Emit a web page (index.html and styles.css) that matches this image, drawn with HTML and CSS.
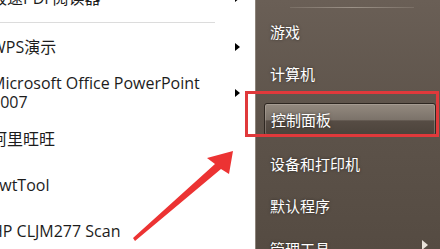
FILE: index.html
```html
<!DOCTYPE html>
<html>
<head>
<meta charset="utf-8">
<link rel="stylesheet" href="styles.css">
</head>
<body>
<div class="menu">
  <div class="programs">
    <div class="row row-top"><span class="label">极速PDF阅读器</span><span class="sub"></span></div>
    <div class="sep"></div>
    <div class="row"><span class="label">WPS演示</span><span class="sub"></span></div>
    <div class="row"><span class="label two">Microsoft Office PowerPoint<br>2007</span><span class="sub"></span></div>
    <div class="row"><span class="label">阿里旺旺</span></div>
    <div class="row"><span class="label">FwtTool</span></div>
    <div class="row"><span class="label">HP CLJM277 Scan</span></div>
  </div>
  <div class="places">
    <div class="psep"></div>
    <div class="item h42"><span>游戏</span></div>
    <div class="item h42"><span>计算机</span></div>
    <div class="item h48"><span class="btn">控制面板</span></div>
    <div class="item h42"><span>设备和打印机</span></div>
    <div class="item h42"><span>默认程序</span></div>
    <div class="item h44"><span>管理工具</span><span class="wsub"></span></div>
  </div>
</div>
<div class="redbox"></div>
<svg class="arrow" width="440" height="249" viewBox="0 0 440 249">
  <polygon points="233,151 207,158 215,164 133,238 135,241 221,169 229,174" fill="#ec3333"/>
</svg>
</body>
</html>
```
FILE: styles.css
```css
html, body {
  margin: 0;
  padding: 0;
  width: 440px;
  height: 249px;
  overflow: hidden;
  background: #ffffff;
}
.menu {
  display: flex;
  width: 440px;
  height: 249px;
}
.programs {
  width: 255px;
  flex: none;
  overflow: hidden;
  background: #ffffff;
  font-family: "Open Sans", "Noto Sans CJK SC", sans-serif;
  font-size: 16px;
  color: #1c1c1c;
  margin-top: -14px;
}
.row {
  height: 46px;
  display: flex;
  align-items: center;
  justify-content: space-between;
  padding-right: 15px;
}
.row-top {
  height: 24px;
}
.label {
  margin-left: -9px;
  line-height: 19px;
  white-space: nowrap;
}
.sub {
  width: 0;
  height: 0;
  border-top: 4px solid transparent;
  border-bottom: 4px solid transparent;
  border-left: 5px solid #000;
}
.sep {
  height: 1px;
  margin: 12px 40px 1px 0;
  background: #dcdcdc;
}
.places {
  flex: 1;
  height: 249px;
  box-sizing: border-box;
  border-left: 1px solid #8c837a;
  background: linear-gradient(#6a5f56, #5d534a 50%, #554b42);
  font-family: "Noto Sans CJK SC", sans-serif;
  font-size: 15px;
  color: #ffffff;
  text-shadow: 0 0 3px rgba(0,0,0,0.5);
  padding-top: 7px;
}
.psep {
  height: 1px;
  margin: 0 26px 2px 34px;
  background: linear-gradient(90deg, rgba(160,150,140,0.3), #9c9288 50%, rgba(160,150,140,0.3));
}
.item {
  display: flex;
  align-items: center;
  justify-content: space-between;
  padding-left: 14px;
  padding-right: 12px;
}
.h42 { height: 42px; }
.h44 { height: 44px; }
.h48 { height: 48px; }
.btn {
  flex: 1;
  margin-left: -6px;
  margin-right: -8px;
  margin-top: 2px;
  height: 33px;
  box-sizing: border-box;
  padding-left: 6px;
  display: flex;
  align-items: center;
  border: 1px solid #2e2721;
  border-radius: 3px;
  box-shadow: inset 0 0 0 1px rgba(200,190,180,0.35);
  background: linear-gradient(#948a80, #7c736a 50%, #564c44 55%, #4c433b);
}
.wsub {
  width: 0;
  height: 0;
  border-top: 5px solid transparent;
  border-bottom: 5px solid transparent;
  border-left: 6px solid #e8e2da;
  margin-top: -6px;
}
.redbox {
  position: absolute;
  left: 245px;
  top: 91px;
  width: 188px;
  height: 40px;
  border: 3px solid #e0393b;
}
.arrow {
  position: absolute;
  left: 0;
  top: 0;
}
```
